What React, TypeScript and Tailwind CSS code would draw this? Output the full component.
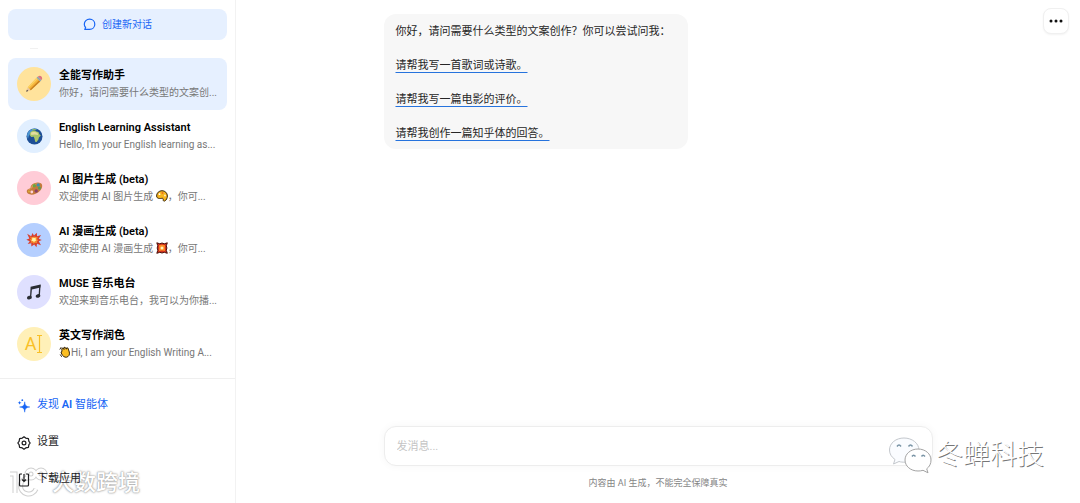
import type { ReactNode } from 'react';
import { clsx } from 'clsx';

function PencilArt() {
  return (
    <svg width="18" height="18" viewBox="0 0 18 18" aria-hidden="true">
      <path d="M1.2 16.8 2.8 12.2 5.8 15.2Z" fill="#e8c49a" />
      <path d="M1.2 16.8 1.9 14.8 3.2 16.1Z" fill="#3f3b39" />
      <path d="M2.8 12.2 11.6 2.8 15.2 6.4 5.8 15.2Z" fill="#f6b73c" />
      <path d="M2.8 12.2 11.6 2.8 12.7 3.9 3.7 13.1Z" fill="#fbd364" />
      <path d="M4.9 14.3 14.1 5.3 15.2 6.4 5.8 15.2Z" fill="#c98222" />
      <path d="M11.6 2.8 12.9 1.5 16.5 5.1 15.2 6.4Z" fill="#8fa3ad" />
      <path d="M12.9 1.5c1.3-1.2 2.7-.9 3.5-.1s1.2 2.4.1 3.7Z" fill="#dd7380" />
    </svg>
  );
}

function GlobeArt() {
  return (
    <svg width="17" height="17" viewBox="0 0 17 17" aria-hidden="true">
      <circle cx="8.5" cy="8.5" r="8" fill="#1d4f96" />
      <path d="M1.5 5A8 8 0 0 1 12 1.3C8 1.5 3.5 4 2 11A8 8 0 0 1 1.5 5Z" fill="#4a94d2" />
      <path
        d="M4.2 4.4 6 3l3-.4 1.4 1 2 .3 1 2.3 1.4 1.3-1.9 1.9-.5 2.2-1.8 2.5-1.4-.3-.7-3-.7-2-2.6.1L3.6 7.1Z"
        fill="#a9c56a"
      />
      <path d="m5 4.6 3-.8 3.5 1L12 7 8.8 6.6 5.2 7Z" fill="#e5dda0" />
      <path d="m5.8 1.6 2-.6 2.6.3-1.2.9-2.6.2Z" fill="#8db765" />
    </svg>
  );
}

function PaletteArt() {
  return (
    <svg width="17" height="17" viewBox="0 0 17 17" aria-hidden="true">
      <path
        d="M14.8 3.2c2.2 1.2 1.7 4.8-.5 7.2-2.5 2.8-6.4 4.5-9.7 4.2C2 14.3.4 12.7.8 10.8c.4-1.7 2-1.6 3.1-2.2 1.3-.8.2-1.9 1.5-3.4 2-2.4 6.9-3.4 9.4-2Z"
        fill="#c47a3b"
      />
      <path d="M5.7 5.4c2-2 6.2-2.8 8.5-1.8-2.3.2-5.5 1-7.2 3.2-1 1.4-2.8 3.5-5.5 3.6 1-1.8 3.1-1 3.5-2.4Z" fill="#dd9a57" />
      <circle cx="8.3" cy="5.7" r="1.6" fill="#68a83e" />
      <circle cx="12.2" cy="4.9" r="1.6" fill="#3a8fb7" />
      <circle cx="13.4" cy="8" r="1.5" fill="#4fa05b" />
      <circle cx="10.2" cy="11" r="1.7" fill="#8b3e66" />
      <circle cx="5.8" cy="12" r="1.4" fill="#ffd2da" />
      <circle cx="3" cy="11.4" r="1" fill="#d8ad35" />
    </svg>
  );
}

function BurstArt() {
  return (
    <svg width="16" height="16" viewBox="0 0 16 16" aria-hidden="true">
      <path
        d="m1.2 1.8 4 2.5L6.4.9 8 3.6 10.8.7l.3 3.6 4-1.2-2.4 3.6 3.1 1.2-3 1.3 2.2 4-4-1.5-.5 3.5-2.3-2.8-2.8 2-.2-3.1-3.5.7 2-2.8L.3 7.8l3-1.3Z"
        fill="#d8402f"
      />
      <path d="m3.8 4.2 2.3 1.2 2-1 2 .7 1.6-.2-.6 2 1 1.5-1.4 1 .6 1.8-2-.4-1.7 1-1.2-1.2-1.8.3.6-1.8-1.5-1.3 1.3-1Z" fill="#f58b2c" />
      <path d="m6.3 5.6 1.8.5 1.7-.4-.2 1.7.9 1.1-1.5.5-1 1.2L7 9l-1.6-.1.7-1.3Z" fill="#fff3a6" />
    </svg>
  );
}

function NotesArt() {
  return (
    <svg width="16" height="18" viewBox="0 0 16 18" aria-hidden="true" fill="#2a2d33">
      <path d="M4.6 3.8 14.6 1.4 14.4 4.6 5.9 6.4 5.2 14.2 4 14.1Z" />
      <path d="m13.3 2 1.3-.3-.7 10.9-1.3-.1Z" />
      <ellipse cx="3.4" cy="14.6" rx="2.5" ry="1.8" transform="rotate(-15 3.4 14.6)" />
      <ellipse cx="12" cy="12.9" rx="2.4" ry="1.8" transform="rotate(-15 12 12.9)" />
    </svg>
  );
}

function WritingArt() {
  return (
    <span className="flex items-center text-[#f9bf26]">
      <span className="text-lg leading-5">A</span>
      <svg width="7" height="20" viewBox="0 0 7 20" fill="none" stroke="currentColor" aria-hidden="true">
        <path d="M1 1.5h5M3.5 1.5v17M1 18.5h5" strokeWidth="1.2" />
      </svg>
    </span>
  );
}

function InlinePalette() {
  return (
    <svg className="inline-block align-[-2px]" width="12" height="12" viewBox="0 0 12 12" aria-hidden="true">
      <path
        d="M6 .7C9 .7 11.4 3 11.4 6c0 2-1 4.2-2.7 5-.9.4-1.6-.2-1.5-1 .2-1.2-.2-1.8-1.2-1.7-1.7.3-5.3.7-5.4-2.3C.5 3 3 .7 6 .7Z"
        fill="#f7b51e"
        stroke="#3a2a12"
        strokeWidth="1"
      />
      <circle cx="3.5" cy="4.2" r=".9" fill="#fff" />
      <circle cx="6.5" cy="3" r=".9" fill="#e87025" />
      <circle cx="9" cy="5.5" r=".9" fill="#fff3cc" />
    </svg>
  );
}

function InlineBurst() {
  return (
    <svg className="inline-block align-[-2px]" width="12" height="12" viewBox="0 0 12 12" aria-hidden="true">
      <path d="m.8.8 3 1 2.2-.8 2.3.8 3-1-1 3 .6 2.2-.6 2.3 1 3-3-1-2.3.7-2.2-.7-3 1 1-3-.6-2.3.6-2.2Z" fill="#d3321e" stroke="#4a120c" />
      <path d="m3 3.2 3-.4 3 .4-.2 2.8.2 3-3-.4-3 .4.3-3Z" fill="#ff8d24" />
      <circle cx="6" cy="6" r="1.5" fill="#fff5bd" />
    </svg>
  );
}

function InlineWave() {
  return (
    <svg className="inline-block align-[-2px]" width="12" height="12" viewBox="0 0 12 12" aria-hidden="true">
      <path
        d="m3 5.5-.2-3L4 2l1 1.5L4.8 1.6 6 1.2l1.3 2 .4-1.4 1.2.2 1.4 4c.7 2.6-.6 4.8-2.8 5.2-2 .3-3.7-1-4.8-3.2L2 6Z"
        fill="#fbbe22"
        stroke="#33250f"
        strokeWidth="1"
      />
      <path d="M.8 3.5 2.2 1.2M1.2 8.5l1.5 2.3" stroke="#33250f" fill="none" />
    </svg>
  );
}

interface Assistant {
  name: string;
  preview: ReactNode;
  art: ReactNode;
  avatar: string;
}

const ASSISTANTS: Assistant[] = [
  {
    name: '全能写作助手',
    preview: '你好，请问需要什么类型的文案创...',
    art: <PencilArt />,
    avatar: 'bg-[#ffe39c]',
  },
  {
    name: 'English Learning Assistant',
    preview: "Hello, I'm your English learning as...",
    art: <GlobeArt />,
    avatar: 'bg-[#e1efff]',
  },
  {
    name: 'AI 图片生成 (beta)',
    preview: (
      <>
        欢迎使用 AI 图片生成 <InlinePalette />，你可...
      </>
    ),
    art: <PaletteArt />,
    avatar: 'bg-[#ffccd7]',
  },
  {
    name: 'AI 漫画生成 (beta)',
    preview: (
      <>
        欢迎使用 AI 漫画生成 <InlineBurst />，你可...
      </>
    ),
    art: <BurstArt />,
    avatar: 'bg-[#b5cfff]',
  },
  {
    name: 'MUSE 音乐电台',
    preview: '欢迎来到音乐电台，我可以为你播...',
    art: <NotesArt />,
    avatar: 'bg-[#dfe0ff]',
  },
  {
    name: '英文写作润色',
    preview: (
      <>
        <InlineWave />
        Hi, I am your English Writing A...
      </>
    ),
    art: <WritingArt />,
    avatar: 'bg-[#fff0b8]',
  },
];

const PROMPTS = ['请帮我写一首歌词或诗歌。', '请帮我写一篇电影的评价。', '请帮我创作一篇知乎体的回答。'];

function SparkIcon() {
  return (
    <svg width="14" height="14" viewBox="0 0 14 14" fill="#1765f5" aria-hidden="true">
      <path
        d="M7.7 2.8c.4 3.7 1.2 4.7 5.1 5.2-3.9.5-4.7 1.5-5.1 5.2-.4-3.7-1.2-4.7-5.1-5.2 3.9-.5 4.7-1.5 5.1-5.2Z"
        stroke="#1765f5"
        strokeWidth=".5"
      />
      <path d="M2.6 1.8c.2 1.3.6 1.7 2 2-1.4.3-1.8.7-2 2-.2-1.3-.6-1.7-2-2 1.4-.3 1.8-.7 2-2Z" />
      <circle cx="5.3" cy="1.2" r=".9" />
    </svg>
  );
}

function SettingsIcon() {
  return (
    <svg width="14" height="14" viewBox="0 0 14 14" fill="none" stroke="currentColor" strokeWidth="1.2" strokeLinejoin="round" aria-hidden="true">
      <path d="m7 .8 1.7 1.3 2.7.5.5 2.7L13.2 7l-1.3 1.7-.5 2.7-2.7.5L7 13.2l-1.7-1.3-2.7-.5-.5-2.7L.8 7l1.3-1.7.5-2.7 2.7-.5Z" />
      <circle cx="7" cy="7" r="1.9" />
    </svg>
  );
}

function DownloadIcon() {
  return (
    <svg width="14" height="14" viewBox="0 0 14 14" fill="none" stroke="currentColor" strokeWidth="1.2" aria-hidden="true">
      <path d="M5 1H3.5Q2.5 1 2.5 2v10q0 1 1 1h7q1 0 1-1V2q0-1-1-1H9M7 1v7M5 6.5l2 2 2-2" />
    </svg>
  );
}

function Sidebar() {
  return (
    <aside className="flex w-[236px] shrink-0 flex-col border-r border-[#f2f2f2]">
      <div className="px-2 pt-[9px]">
        <button className="flex h-[31px] w-full items-center justify-center gap-1.5 rounded-lg bg-[#e6f0ff] text-[10px] text-[#1765f5]">
          <svg width="13" height="13" viewBox="0 0 13 13" fill="none" stroke="currentColor" strokeWidth="1.2" aria-hidden="true">
            <path
              d="M6.6 1.2c3 0 5.2 2.2 5.2 5 0 2.9-2.2 5.2-5.2 5.2H1.8l.8-1.9C1.7 8.6 1.3 7.5 1.3 6.3c0-2.900 2.300-5.100 5.300-5.100Z"
              strokeLinejoin="round"
            />
          </svg>
          创建新对话
        </button>
      </div>

      {/* Bottom edge of the avatar scrolled out of view */}
      <div className="mt-2 mb-[9px] ml-[30px] h-px w-2 bg-[#f1f1f1]" />

      {/* Assistants */}
      <ul className="px-2">
        {ASSISTANTS.map((item, index) => (
          <li key={item.name}>
            <button
              className={clsx(
                'flex h-[52px] w-full items-center gap-2 rounded-lg px-[9px] text-left',
                index === 0 && 'bg-[#e6f0ff]',
              )}
            >
              <span className={clsx('flex size-[34px] shrink-0 items-center justify-center rounded-full', item.avatar)}>
                {item.art}
              </span>
              <span className="min-w-0 flex-1 whitespace-nowrap">
                <span className="block text-[11px] leading-4 font-semibold text-black">{item.name}</span>
                <span className="block text-[10px] leading-[17px] text-[#777]">{item.preview}</span>
              </span>
            </button>
          </li>
        ))}
      </ul>

      <nav className="relative mt-2 border-t border-[#efefef] px-[17px] pt-2 text-[11px] text-[#1c1c1e]">
        <a href="#discover" className="flex h-[37px] items-center gap-1.5 text-[#1765f5]">
          <SparkIcon />
          <span>
            发现 <span className="font-semibold">AI</span> 智能体
          </span>
        </a>
        <a href="#settings" className="flex h-[37px] items-center gap-1.5">
          <SettingsIcon />
          设置
        </a>
        <a href="#download" className="flex h-[37px] items-center gap-1.5">
          <DownloadIcon />
          下载应用
        </a>
      </nav>
    </aside>
  );
}

function ChatPanel() {
  return (
    <main className="relative flex min-w-0 flex-1 flex-col px-4 pt-3.5">
      <button
        aria-label="更多"
        className="absolute top-2 right-[11px] flex size-[26px] items-center justify-center rounded-lg border border-[#f0f0f0] bg-white shadow-xs"
      >
        <svg width="14" height="4" viewBox="0 0 14 4" fill="#111" aria-hidden="true">
          <circle cx="2" cy="2" r="1.5" />
          <circle cx="7" cy="2" r="1.5" />
          <circle cx="12" cy="2" r="1.5" />
        </svg>
      </button>

      <div className="mx-auto flex w-full max-w-[549px] flex-1 flex-col">
        <section className="flex w-[304px] flex-col gap-[17px] rounded-xl bg-[#f7f7f7] px-3 pt-[9px] pb-[7px] text-[11px] leading-[17px] whitespace-nowrap text-[#262626]">
          <p>你好，请问需要什么类型的文案创作？你可以尝试问我：</p>
          {PROMPTS.map((prompt) => (
            <a
              key={prompt}
              href="#prompt"
              className="self-start underline decoration-[#2673dd] decoration-1 underline-offset-[3px]"
            >
              {prompt}
            </a>
          ))}
        </section>

        <div className="flex-1" />

        <input
          aria-label="发消息"
          placeholder="发消息..."
          className="h-10 w-full rounded-xl border border-[#ededed] bg-white px-3 text-[11px] shadow-[0_0_8px_rgba(0,0,0,0.04)] outline-none placeholder:text-[#c4c4c4]"
        />
        <p className="pt-[9px] pb-3 text-center text-[9px] leading-4 text-[#858585]">内容由 AI 生成，不能完全保障真实</p>
      </div>
    </main>
  );
}

function ChannelMark() {
  return (
    <div className="pointer-events-none absolute right-9 bottom-[28px] flex items-center gap-1">
      <svg width="44" height="40" viewBox="0 0 44 40" fill="#fff" stroke="#a3a3a3" strokeWidth="1" aria-hidden="true">
        <path d="M16 3C8 3 1.5 8 1.5 15c0 4 2 7 5.5 9.5L5.5 29l5.500-2.500c2 .6 3.500.7 6 .7 8 0 14-5 14-12S24 3 16 3Z" fill="#fafcff" stroke="#c4c8cd" />
        <path d="M30 14c-7.5 0-13 5-13 11s5.5 11 13 11c2 0 3.500-.2 5-.7l5 2.500-1.300-4c3-2.200 4.300-5.300 4.300-8.800 0-6-5.500-11-13-11Z" />
        <path
          d="M9 11.5q2-3 4 0M20.5 11.5q2-3 4 0M24 21.5q1.5-2.5 3.5 0M33.5 21.5q1.5-2.5 3.5 0"
          fill="none"
          stroke="#7893a5"
          strokeWidth="1.5"
        />
      </svg>
      <span className="text-[27px] leading-8 font-light text-white [text-shadow:1px_1px_0_#777]">冬蝉科技</span>
    </div>
  );
}

function SiteMark() {
  return (
    <div className="pointer-events-none absolute bottom-1 left-2 flex items-center gap-1">
      <svg width="40" height="32" viewBox="0 0 40 32" fill="none" aria-hidden="true">
        <g stroke="#cfcfcf" strokeWidth="5">
          <path d="M2 7h5v19M28 22a8 8 0 1 1-8-11" />
          <circle cx="23" cy="7" r="4" />
          <circle cx="33" cy="7" r="4" />
        </g>
        <g stroke="#fff" strokeWidth="3">
          <path d="M2 7h5v19M28 22a8 8 0 1 1-8-11" />
          <circle cx="23" cy="7" r="4" />
          <circle cx="33" cy="7" r="4" />
        </g>
      </svg>
      <span className="text-[22px] leading-8 font-medium text-white [text-shadow:0_0_1px_#999,0_0_2px_#aaa,0_0_3px_#ccc]">
        大数跨境
      </span>
    </div>
  );
}

export default function App() {
  return (
    <div className="relative flex h-screen overflow-hidden bg-white font-[Roboto,'Noto_Sans_CJK_SC',sans-serif]">
      <SiteMark />
      <Sidebar />
      <ChatPanel />
      <ChannelMark />
    </div>
  );
}
